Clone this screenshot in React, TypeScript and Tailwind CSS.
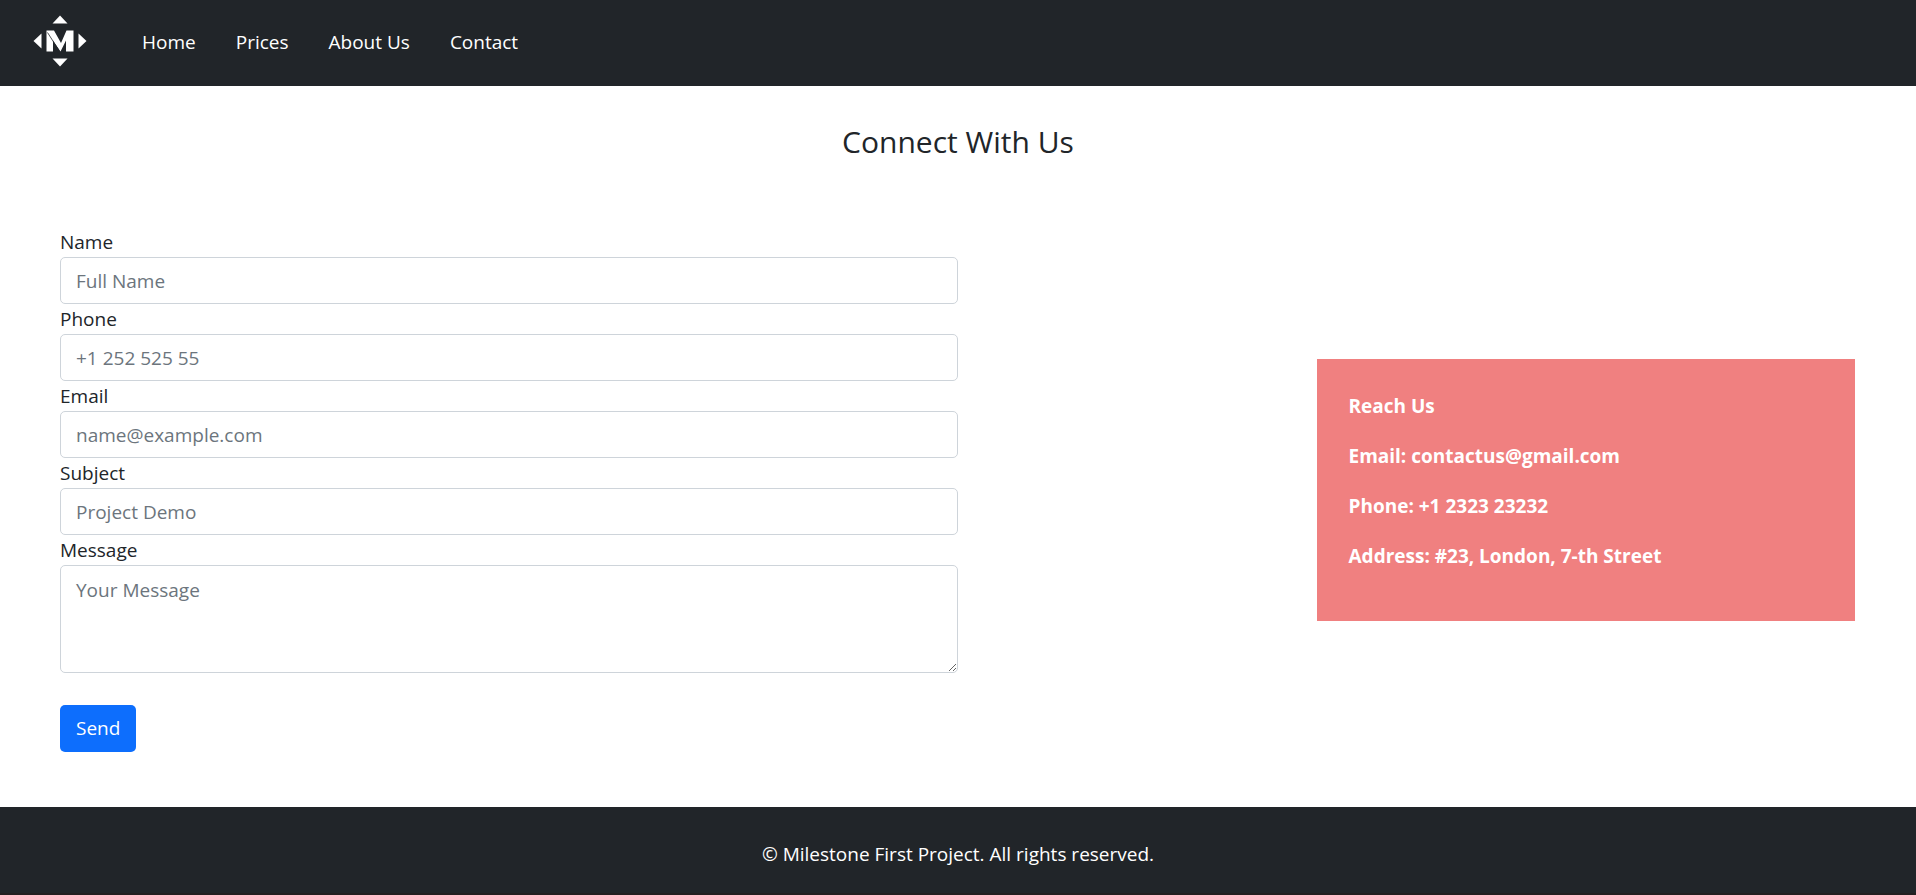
const navLinks = ["Home", "Prices", "About Us", "Contact"];

const fields = [
  { id: "name", label: "Name", type: "text", placeholder: "Full Name" },
  { id: "phone", label: "Phone", type: "tel", placeholder: "+1 252 525 55" },
  { id: "email", label: "Email", type: "email", placeholder: "name@example.com" },
  { id: "subject", label: "Subject", type: "text", placeholder: "Project Demo" },
];

const contactLines = [
  "Email: contactus@gmail.com",
  "Phone: +1 2323 23232",
  "Address: #23, London, 7-th Street",
];

const controlClass =
  "block w-full rounded-[5px] border border-[#ced4da] bg-white px-[15px] text-[19px] placeholder:text-[#6c757d]";

function Logo() {
  return (
    <svg viewBox="0 0 54 52" className="h-[52px] w-[54px]" fill="#fff" role="img" aria-label="Milestone">
      <path d="M27 .5 34.500 8.500H19.500Z" />
      <path d="M27 51.500 34.500 43.500H19.500Z" />
      <path d="M.5 26 8.500 18.500V33.500Z" />
      <path d="M53.500 26 45.500 18.500V33.500Z" />
      <path d="M13.500 15.500H21L28 28 33.500 15.500H40.500V36.500H33V25.500L27.500 36.500 20 25.500V36.500H13.500Z" />
      <path d="M14.500 17.500 26 35.500" stroke="#212529" strokeWidth=".8" />
    </svg>
  );
}

export default function App() {
  return (
    <div className="flex min-h-screen flex-col bg-white font-['Open_Sans','Noto_Sans',sans-serif] text-[19px] leading-[30px] text-[#212529]">
      <header className="flex h-[86px] items-center bg-[#212529] pl-[33px] text-white">
        <a href="#home" className="mr-[55px] pb-1">
          <Logo />
        </a>
        <nav className="pb-0.5">
          <ul className="flex gap-10">
            {navLinks.map((link) => (
              <li key={link}>
                <a href="#">{link}</a>
              </li>
            ))}
          </ul>
        </nav>
      </header>

      <main className="grow">
        <h1 className="pt-9 text-center text-[30px] leading-10">Connect With Us</h1>
        <section className="flex items-center justify-between pt-[65px] pr-[61px] pb-[54px] pl-[60px]">
          <form className="w-1/2">
            {fields.map((field) => (
              <div key={field.id}>
                <label htmlFor={field.id} className="block">
                  {field.label}
                </label>
                <input
                  id={field.id}
                  type={field.type}
                  placeholder={field.placeholder}
                  className={`${controlClass} pt-[9px] pb-[7px] leading-[29px]`}
                />
              </div>
            ))}
            <label htmlFor="message" className="block">
              Message
            </label>
            <textarea
              id="message"
              rows={3}
              placeholder="Your Message"
              className={`${controlClass} pt-[9px] pb-[7px] leading-[30px]`}
            />
            <button type="button" className="mt-8 rounded-[5px] bg-[#0d6efd] px-4 py-2 leading-[31px] text-white">
              Send
            </button>
          </form>
          <aside className="w-[30%] space-y-5 bg-[#f08080] px-8 pt-8 pb-[50px] font-bold text-white">
            <h2>Reach Us</h2>
            {contactLines.map((line) => (
              <p key={line}>{line}</p>
            ))}
          </aside>
        </section>
      </main>

      <footer className="border-b-2 border-[#231f20] bg-[#212529] pt-8 pb-6 text-center text-white">
        <p>© Milestone First Project. All rights reserved.</p>
      </footer>
    </div>
  );
}
